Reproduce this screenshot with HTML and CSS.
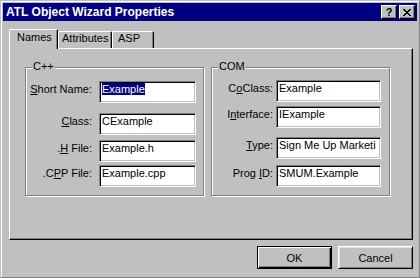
FILE: index.html
```html
<!DOCTYPE html>
<html lang="en">
<head>
    <meta charset="UTF-8">
    <meta name="viewport" content="width=device-width, initial-scale=1.0">
    <title>ATL Object Wizard Properties</title>
    <link rel="stylesheet" href="styles.css">
</head>
<body>
    <div class="window">
        <div class="titlebar">
            <span class="title">ATL Object Wizard Properties</span>
            <div class="title-buttons">
                <div class="tbtn">?</div>
                <div class="tbtn">
                    <svg width="8" height="7" viewBox="0 0 8 7" shape-rendering="crispEdges">
                        <path d="M0 0h2v1H0zM6 0h2v1H6zM1 1h2v1H1zM5 1h2v1H5zM2 2h4v1H2zM3 3h2v1H3zM2 4h4v1H2zM1 5h2v1H1zM5 5h2v1H5zM0 6h2v1H0zM6 6h2v1H6z" fill="#000"/>
                    </svg>
                </div>
            </div>
        </div>

        <div class="content">
            <div class="tabs">
                <div class="tab active tab-names">Names</div>
                <div class="tab tab-attr">Attributes</div>
                <div class="tab tab-asp">ASP</div>
            </div>

            <div class="panel">
                <div class="group cpp">
                    <span class="legend">C++</span>
                    <div class="row r1">
                        <label><u>S</u>hort Name:</label>
                        <div class="edit"><span class="sel">Example</span></div>
                    </div>
                    <div class="row r2">
                        <label><u>C</u>lass:</label>
                        <div class="edit">CExample</div>
                    </div>
                    <div class="row r3">
                        <label>.<u>H</u> File:</label>
                        <div class="edit">Example.h</div>
                    </div>
                    <div class="row r4">
                        <label>.C<u>P</u>P File:</label>
                        <div class="edit">Example.cpp</div>
                    </div>
                </div>

                <div class="group com">
                    <span class="legend">COM</span>
                    <div class="row r1">
                        <label>C<u>o</u>Class:</label>
                        <div class="edit">Example</div>
                    </div>
                    <div class="row r2">
                        <label>I<u>n</u>terface:</label>
                        <div class="edit">IExample</div>
                    </div>
                    <div class="row r3">
                        <label><u>T</u>ype:</label>
                        <div class="edit">Sign Me Up Marketi</div>
                    </div>
                    <div class="row r4">
                        <label>Prog <u>I</u>D:</label>
                        <div class="edit">SMUM.Example</div>
                    </div>
                </div>
            </div>

            <div class="buttons">
                <div class="btn default">OK</div>
                <div class="btn">Cancel</div>
            </div>
        </div>
    </div>
</body>
</html>
```

FILE: styles.css
```css
* {
  box-sizing: border-box;
}

body {
  margin: 0;
  background: #c0c0c0;
  font-family: "Liberation Sans", Arial, sans-serif;
  font-size: 11px;
  color: #000;
}

.window {
  width: 420px;
  height: 278px;
  background: #c0c0c0;
  border: 1px solid;
  border-color: #c0c0c0 #808080 #808080 #c0c0c0;
  box-shadow: inset 1px 1px #fff;
  padding: 2px;
}

.titlebar {
  height: 18px;
  background: #000080;
  color: #fff;
  display: flex;
  align-items: center;
  padding: 0 2px 0 3px;
}

.title {
  flex: 1;
  font-weight: bold;
  font-size: 12px;
}

.title-buttons {
  display: flex;
  gap: 2px;
}

.tbtn {
  width: 16px;
  height: 14px;
  background: #c0c0c0;
  border: 1px solid;
  border-color: #fff #000 #000 #fff;
  box-shadow: inset -1px -1px #808080;
  display: flex;
  align-items: center;
  justify-content: center;
  color: #000;
  font-weight: bold;
  line-height: 12px;
}

.content {
  padding: 8px 4px 0 6px;
}

/* tabs */
.tabs {
  display: flex;
  align-items: flex-end;
  height: 19px;
}

.tab {
  height: 17px;
  border: 1px solid;
  border-bottom: 0;
  border-color: #fff #000 transparent #fff;
  border-radius: 2px 2px 0 0;
  box-shadow: inset -1px 0 #808080;
  line-height: 13px;
  white-space: nowrap;
}

.tab.active {
  height: 20px;
  margin-bottom: -1px;
  padding-top: 1px;
  position: relative;
  z-index: 1;
  background: #c0c0c0;
}

.tab-names {
  width: 49px;
  padding-left: 7px;
}

.tab-attr {
  width: 54px;
  padding-left: 3px;
}

.tab-asp {
  width: 42px;
  padding-left: 5px;
}

.panel {
  height: 192px;
  border: 1px solid;
  border-color: #fff #000 #000 #fff;
  box-shadow: inset -1px -1px #808080;
  display: flex;
  gap: 7px;
  padding: 18px 0 0 15px;
}

/* group boxes */
.group {
  width: 179px;
  height: 129px;
  border: 1px solid #808080;
  box-shadow: inset 1px 1px #fff, 1px 1px #fff;
  display: flex;
  flex-direction: column;
}

.legend {
  align-self: flex-start;
  margin: -8px 0 0 6px;
  padding: 0 1px;
  background: #c0c0c0;
  line-height: 13px;
}

.row {
  display: flex;
  gap: 7px;
}

.row label {
  width: 66px;
  text-align: right;
  padding-top: 2px;
  line-height: 13px;
  white-space: nowrap;
}

.edit {
  width: 97px;
  height: 22px;
  background: #fff;
  border: 1px solid;
  border-color: #808080 #fff #fff #808080;
  box-shadow: inset 1px 1px #000, inset -1px -1px #c0c0c0;
  padding: 1px 2px;
  line-height: 13px;
  white-space: nowrap;
  overflow: hidden;
}

.sel {
  background: #000080;
  color: #fff;
}

.cpp .r1 { margin-top: 8px; }
.cpp .r2 { margin-top: 10px; }
.cpp .r3 { margin-top: 5px; }
.cpp .r4 { margin-top: 3px; }

.com .row {
  gap: 3px;
}

.com .row label {
  width: 61px;
}

.com .edit {
  width: 105px;
}

.com .r1 { margin-top: 7px; }
.com .r2 { margin-top: 4px; }
.com .r3 { margin-top: 9px; }
.com .r4 { margin-top: 6px; }

/* dialog buttons */
.buttons {
  display: flex;
  justify-content: flex-end;
  gap: 6px;
  margin-top: 6px;
}

.btn {
  width: 75px;
  height: 23px;
  display: flex;
  align-items: center;
  justify-content: center;
  border: 1px solid;
  border-color: #fff #000 #000 #fff;
  box-shadow: inset 1px 1px #dfdfdf, inset -1px -1px #808080;
}

.btn.default {
  border-color: #000;
  box-shadow: inset 1px 1px #fff, inset -1px -1px #000, inset -2px -2px #808080;
}
```
